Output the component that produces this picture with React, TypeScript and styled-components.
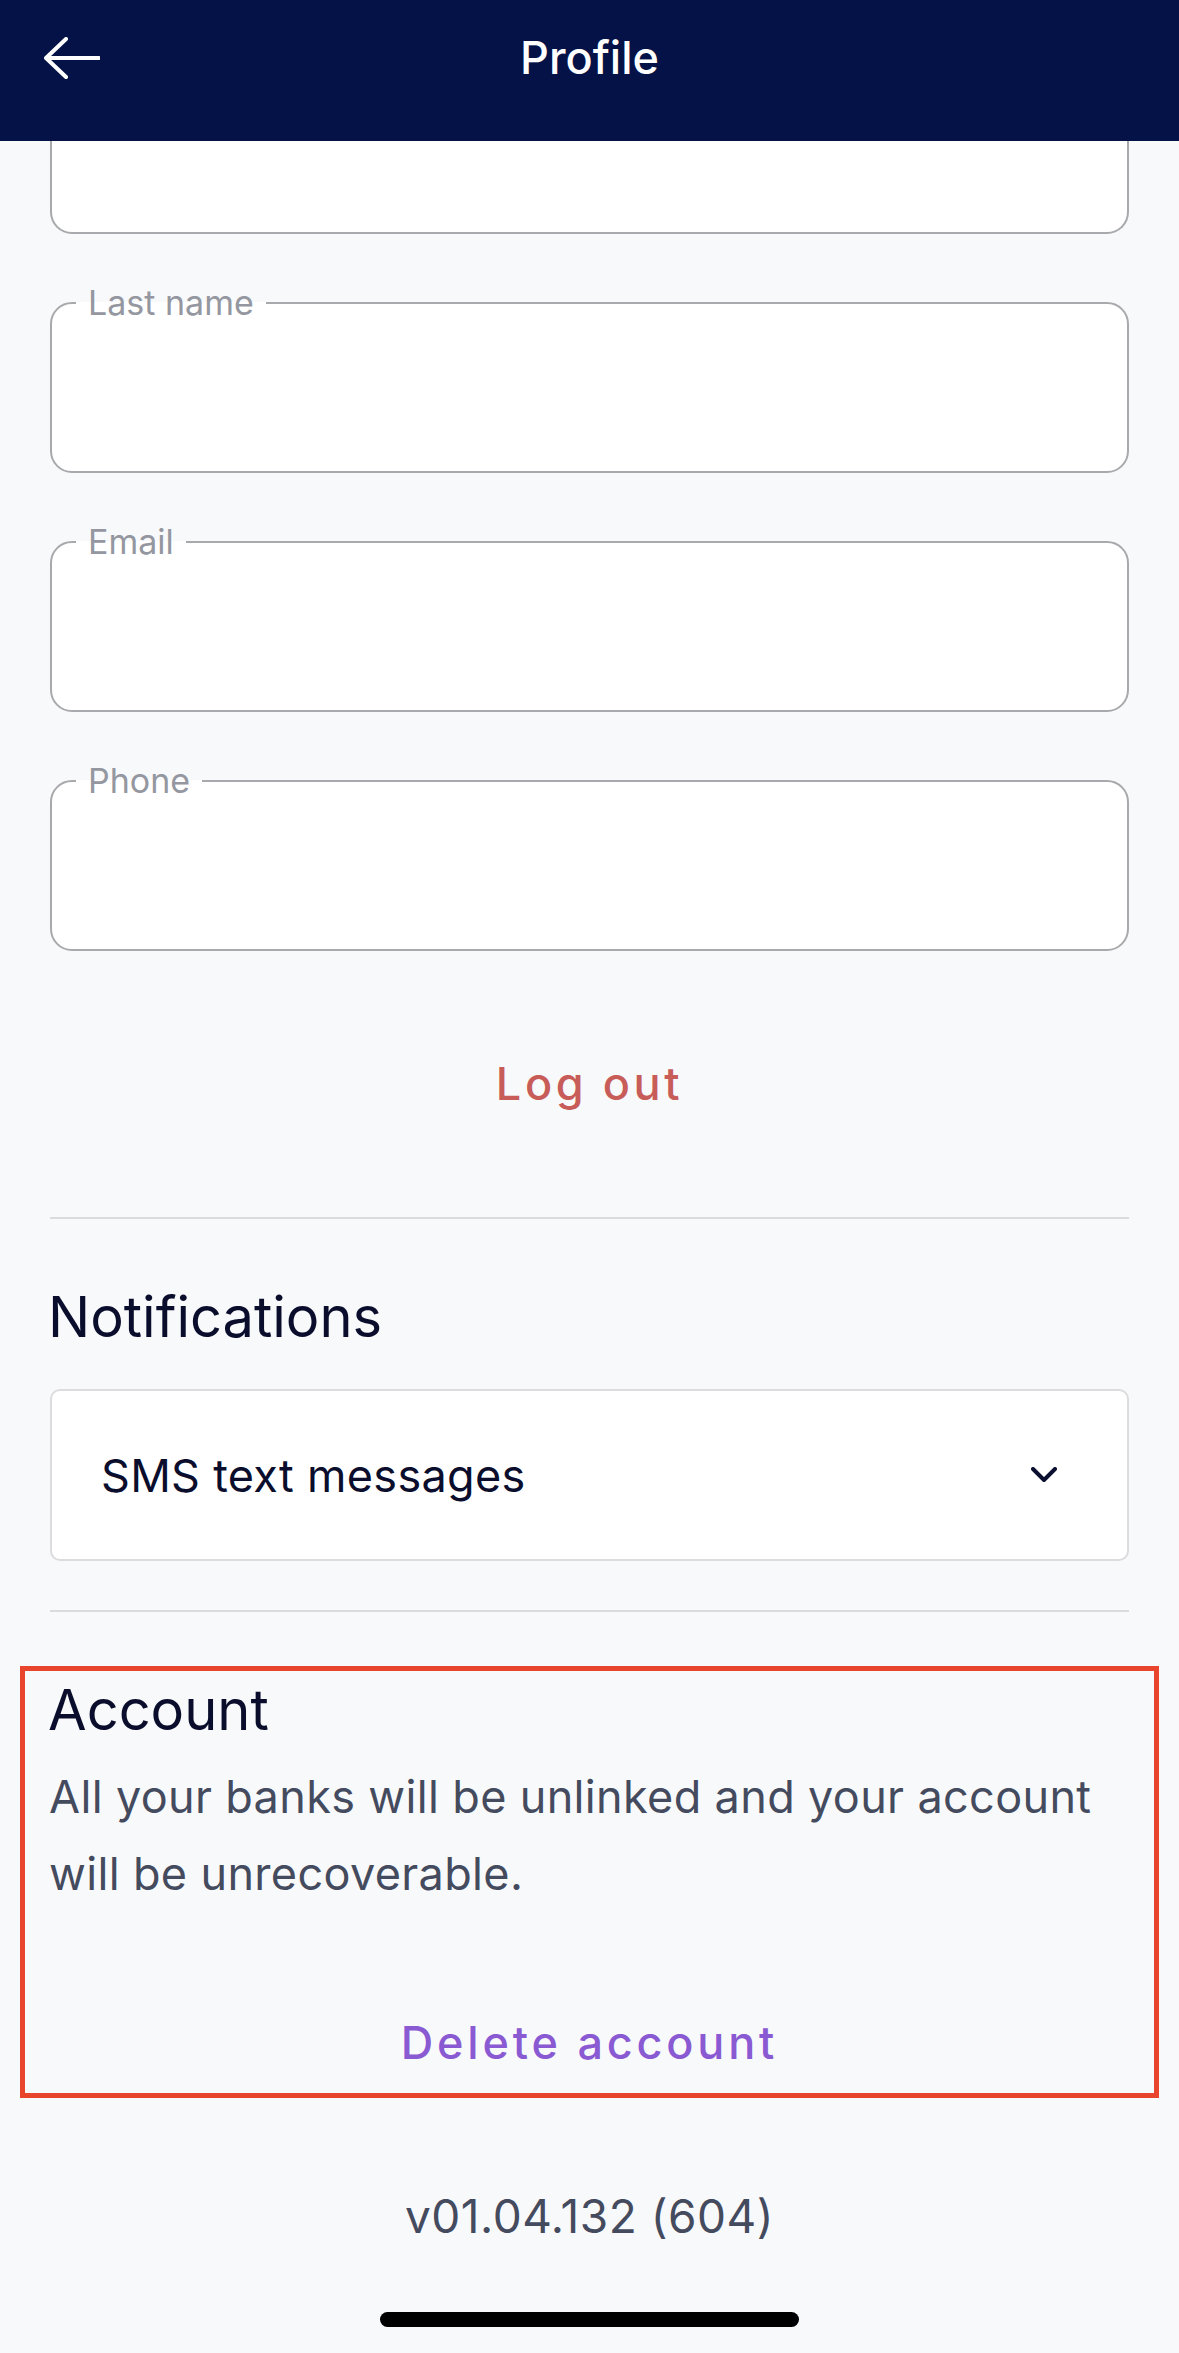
import { createGlobalStyle, styled } from "styled-components";

const GlobalStyle = createGlobalStyle`
    html, body {
        margin: 0;
        padding: 0;
        background: #f8f9fb;
    }
    body {
        font-family: Inter, "Noto Sans", "Liberation Sans", sans-serif;
        -webkit-font-smoothing: antialiased;
    }
`;

const fields = ["Last name", "Email", "Phone"];

function BackArrow() {
    return (
        <svg width="56" height="42" viewBox="0 0 56 42" fill="none">
            <path
                d="M22 2 L2 21 L22 40 M2 21 H55"
                stroke="#ffffff"
                strokeWidth="4"
                strokeLinecap="round"
                strokeLinejoin="round"
            />
        </svg>
    );
}

function Chevron() {
    return (
        <svg width="26" height="16" viewBox="0 0 26 16" fill="none">
            <path d="M2 2 L13 13 L24 2" stroke="#0b1030" strokeWidth="4" strokeLinecap="round" strokeLinejoin="round" />
        </svg>
    );
}

export default function App() {
    return (
        <Page>
            <GlobalStyle />
            <Header>
                <BackButton type="button" aria-label="Back">
                    <BackArrow />
                </BackButton>
                <Title>Profile</Title>
                <span />
            </Header>

            <Content>
                <FormStack>
                    <ClippedField />
                    {fields.map((label) => (
                        <OutlinedField key={label}>
                            <Legend>{label}</Legend>
                            <FieldBody />
                        </OutlinedField>
                    ))}
                </FormStack>

                <TextButton type="button" $tone="danger">
                    Log out
                </TextButton>

                <Divider $top={105} />

                <SectionTitle $top={64}>Notifications</SectionTitle>
                <Select>
                    <SelectText>SMS text messages</SelectText>
                    <Chevron />
                </Select>

                <Divider $top={49} />

                <AccountBox>
                    <SectionTitle $top={0}>Account</SectionTitle>
                    <Paragraph>All your banks will be unlinked and your account will be unrecoverable.</Paragraph>
                    <TextButton type="button" $tone="accent" $top={103}>
                        Delete account
                    </TextButton>
                </AccountBox>

                <Version>v01.04.132 (604)</Version>
                <HomeIndicator />
            </Content>
        </Page>
    );
}

const Page = styled.div`
    width: 1179px;
    min-height: 2353px;
    background: #f8f9fb;
    display: flex;
    flex-direction: column;
`;

const Header = styled.header`
    height: 141px;
    box-sizing: border-box;
    padding: 30px 44px 0;
    background: #041247;
    display: grid;
    grid-template-columns: 1fr auto 1fr;
    align-items: start;
`;

const BackButton = styled.button`
    height: 56px;
    padding: 0;
    border: none;
    background: none;
    display: flex;
    align-items: center;
    justify-self: start;
    cursor: pointer;
`;

const Title = styled.h1`
    margin: 0;
    height: 56px;
    line-height: 56px;
    font-size: 45px;
    font-weight: 500;
    color: #ffffff;
`;

const Content = styled.main`
    padding: 0 50px;
    display: flex;
    flex-direction: column;
`;

const FormStack = styled.div`
    display: flex;
    flex-direction: column;
    gap: 52px;
`;

const ClippedField = styled.div`
    height: 93px;
    box-sizing: border-box;
    background: #ffffff;
    border: 2px solid #a8a9ad;
    border-top: none;
    border-radius: 0 0 22px 22px;
`;

const OutlinedField = styled.fieldset`
    margin: 0;
    padding: 0;
    min-width: 0;
    border: 2px solid #a8a9ad;
    border-radius: 22px;
    background: #ffffff;
`;

const Legend = styled.legend`
    margin-left: 24px;
    padding: 0 12px;
    font-size: 34px;
    line-height: 34px;
    color: #9497a0;
`;

const FieldBody = styled.div`
    height: 151px;
`;

const TextButton = styled.button<{ $tone: "danger" | "accent"; $top?: number }>`
    align-self: center;
    margin-top: ${(p) => p.$top ?? 105}px;
    height: 56px;
    padding: 0;
    border: none;
    background: none;
    font-family: inherit;
    font-size: 45px;
    line-height: 56px;
    font-weight: 500;
    letter-spacing: ${(p) => (p.$tone === "danger" ? 3.6 : 3.8)}px;
    color: ${(p) => (p.$tone === "danger" ? "#c75c59" : "#8a5ad3")};
    cursor: pointer;
`;

const Divider = styled.hr<{ $top: number }>`
    margin: ${(p) => p.$top}px 0 0;
    height: 2px;
    border: none;
    background: #dadbdf;
`;

const SectionTitle = styled.h2<{ $top: number }>`
    margin: ${(p) => p.$top}px 0 0 -2px;
    font-size: 56px;
    line-height: 68px;
    font-weight: 400;
    color: #0a0e2c;
`;

const Select = styled.div`
    margin-top: 38px;
    height: 172px;
    box-sizing: border-box;
    padding: 0 70px 0 49px;
    background: #ffffff;
    border: 2px solid #dcdcdf;
    border-radius: 10px;
    display: flex;
    align-items: center;
    justify-content: space-between;
`;

const SelectText = styled.span`
    font-size: 45px;
    letter-spacing: 0.3px;
    color: #0a0e2c;
`;

const AccountBox = styled.section`
    margin: 54px -30px 0;
    padding: 5px 25px 22px;
    border: 5px solid #e8452c;
    display: flex;
    flex-direction: column;
`;

const Paragraph = styled.p`
    margin: 14px 0 0 -1px;
    font-size: 45px;
    line-height: 77px;
    letter-spacing: 0.35px;
    color: #454b5e;
`;

const Version = styled.div`
    margin-top: 90px;
    text-align: center;
    font-size: 46px;
    line-height: 56px;
    letter-spacing: 0.5px;
    color: #454b5e;
`;

const HomeIndicator = styled.div`
    align-self: center;
    margin-top: 68px;
    width: 419px;
    height: 15px;
    border-radius: 8px;
    background: #000000;
`;
